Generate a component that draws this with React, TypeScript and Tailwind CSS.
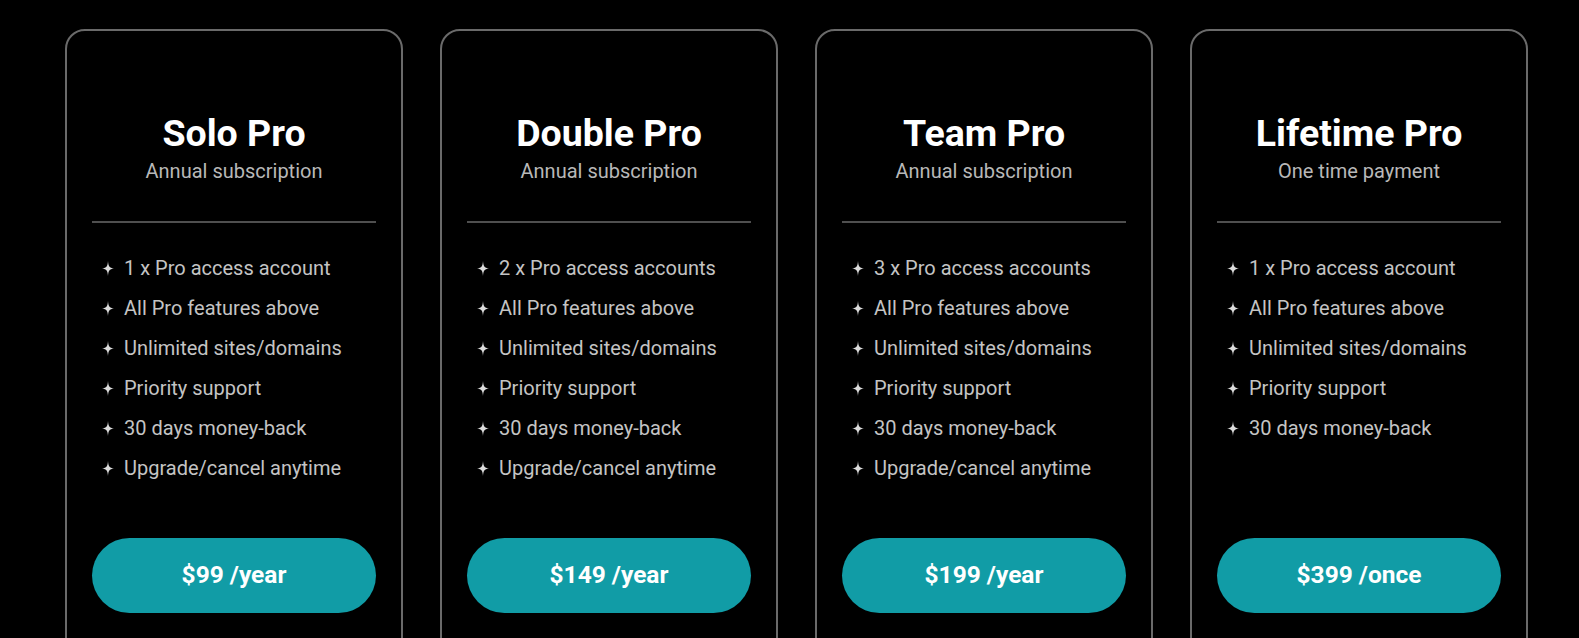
import React from "react";

type Plan = {
  name: string;
  note: string;
  features: string[];
  price: string;
};

const common = [
  "All Pro features above",
  "Unlimited sites/domains",
  "Priority support",
  "30 days money-back",
];

const plans: Plan[] = [
  {
    name: "Solo Pro",
    note: "Annual subscription",
    features: ["1 x Pro access account", ...common, "Upgrade/cancel anytime"],
    price: "$99 /year",
  },
  {
    name: "Double Pro",
    note: "Annual subscription",
    features: ["2 x Pro access accounts", ...common, "Upgrade/cancel anytime"],
    price: "$149 /year",
  },
  {
    name: "Team Pro",
    note: "Annual subscription",
    features: ["3 x Pro access accounts", ...common, "Upgrade/cancel anytime"],
    price: "$199 /year",
  },
  {
    name: "Lifetime Pro",
    note: "One time payment",
    features: ["1 x Pro access account", ...common],
    price: "$399 /once",
  },
];

function Sparkle() {
  return (
    <svg width="12" height="15" viewBox="0 0 12 15" className="shrink-0">
      <path
        d="M6 0 C6.4 5.3 7.2 6.8 12 7.5 C7.2 8.2 6.4 9.7 6 15 C5.6 9.7 4.8 8.2 0 7.5 C4.8 6.8 5.6 5.3 6 0 Z"
        fill="#dcdcdc"
      />
    </svg>
  );
}

function PlanCard({ plan }: { plan: Plan }) {
  return (
    <div className="flex h-[680px] w-[338px] shrink-0 flex-col rounded-[20px] border-2 border-[#6a6a6a] px-[25px] pt-[82px]">
      <div className="text-center">
        <h2 className="text-[37.5px] font-bold leading-[40px] text-white">{plan.name}</h2>
        <p className="mt-[6px] text-[20px] leading-[24px] text-[#b8b8b8]">{plan.note}</p>
      </div>

      <div className="mt-[38px] h-[2px] bg-[#4f4f4f]" />

      <ul className="mt-[25px] h-[290px] pl-[10px]">
        {plan.features.map((f) => (
          <li key={f} className="flex h-[40px] items-center gap-[10px] text-[20px] text-[#c4c4c4]">
            <Sparkle />
            <span>{f}</span>
          </li>
        ))}
      </ul>

      <button
        type="button"
        className="h-[75px] w-full rounded-full bg-[#119ca6] text-[24.5px] font-bold text-white"
      >
        {plan.price}
      </button>
    </div>
  );
}

export default function App() {
  return (
    <div
      className="h-[638px] w-full overflow-hidden bg-black"
      style={{ fontFamily: "Roboto, 'Liberation Sans', sans-serif" }}
    >
      <div className="flex gap-[37px] pl-[65px] pt-[29px]">
        {plans.map((p) => (
          <PlanCard key={p.name} plan={p} />
        ))}
      </div>
    </div>
  );
}
